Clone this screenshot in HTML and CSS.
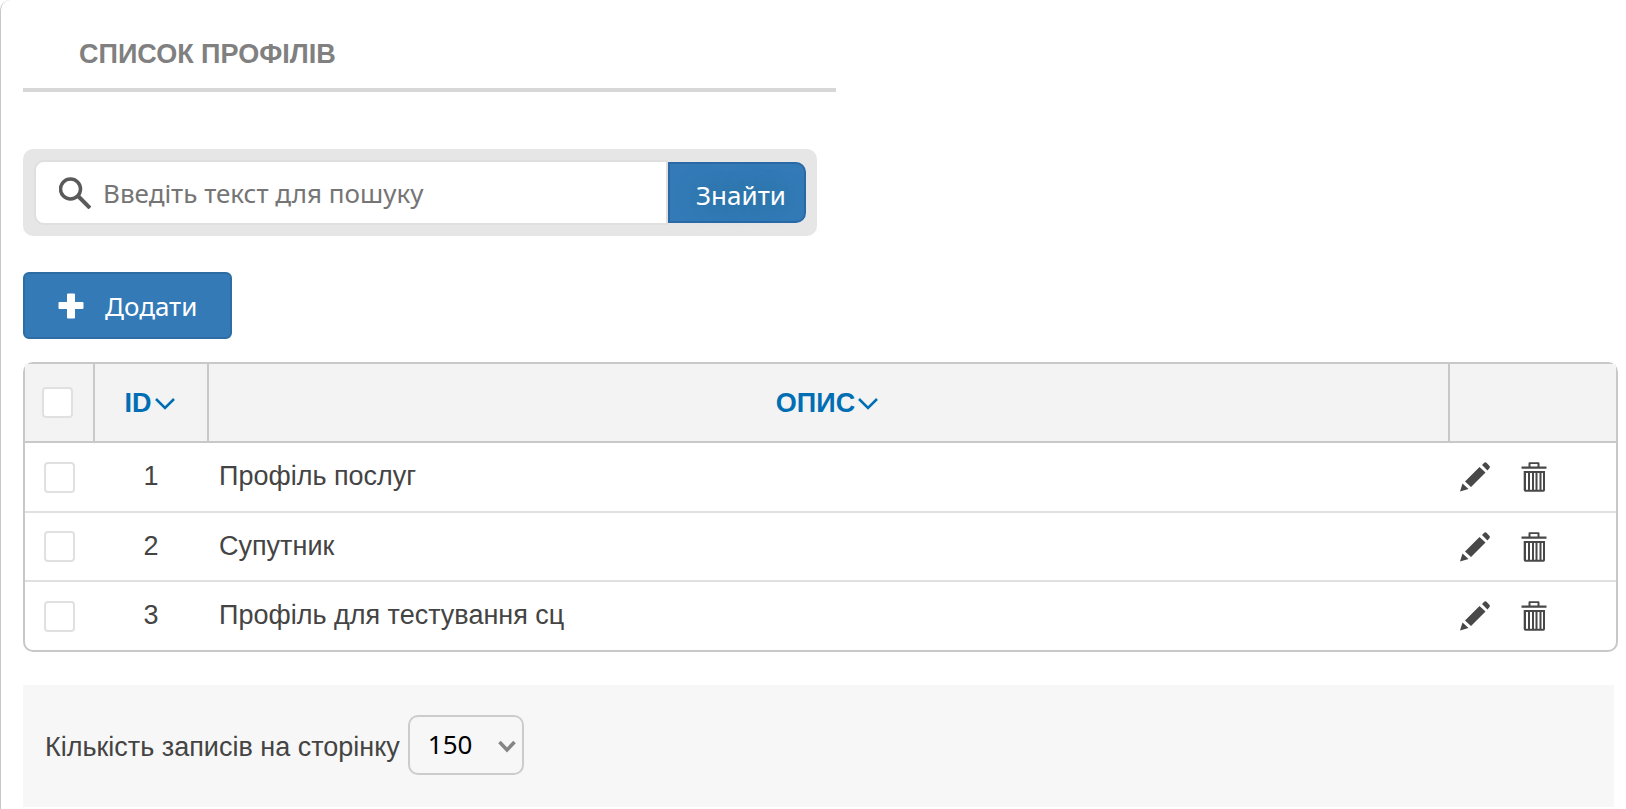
FILE: index.html
```html
<!DOCTYPE html>
<html lang="uk">
<head>
<meta charset="utf-8">
<title>Список профілів</title>
<link rel="stylesheet" href="styles.css">
</head>
<body>
<svg class="sprite" aria-hidden="true">
  <symbol id="pencil" viewBox="0 0 30 30">
    <path d="M0 29.500L2.500 21.500L8.500 27ZM5 19.500L19.500 5L25.500 10.500L11 25ZM22 3L24.500 .5Q25.500 -.3 26.500 .7L29.500 4Q30.300 5 29.500 6L27.500 8.500Z"/>
  </symbol>
  <symbol id="trash" viewBox="0 0 26 30">
    <path fill-rule="evenodd" d="M0.500 4.500H7.500V1.500Q7.500 .3 8.500 .3H17.500Q18.500 .3 18.500 1.500V4.500H25.500V6.700H0.500ZM9.500 2V4.500H16.500V2ZM2.700 9H24V28Q24 29.700 22.500 29.700H4.500Q2.700 29.700 2.700 28ZM5 11V27.700H7V11ZM9 11V27.700H11V11ZM13 11V27.700H14.500V11ZM16.500 11V27.700H18.500V11ZM20.500 11V27.700H22V11Z"/>
  </symbol>
  <symbol id="chevron" viewBox="0 0 20 12">
    <path d="M1 1L10 10L19 1" fill="none" stroke="currentColor" stroke-width="2.500"/>
  </symbol>
</svg>
<main class="panel">
  <h1 class="title">СПИСОК ПРОФІЛІВ</h1>

  <form class="search" role="search">
    <label class="search-field">
      <svg class="search-icon" viewBox="0 0 32 32" aria-hidden="true"><circle cx="11.500" cy="12" r="10" fill="none" stroke="#5a5a5a" stroke-width="3.500"/><path d="M19 19L31 31" stroke="#5a5a5a" stroke-width="4"/></svg>
      <input class="search-input" type="text" placeholder="Введіть текст для пошуку" aria-label="Пошук">
    </label>
    <button class="search-button" type="button">Знайти</button>
  </form>

  <button class="add-button" type="button">
    <svg class="plus-icon" viewBox="0 0 26 26" aria-hidden="true"><path d="M10 .5H16Q17 .5 17 1.500V9H24.500Q25.500 9 25.500 10V15Q25.500 16 24.500 16H17V24.500Q17 25.500 16 25.500H10Q9 25.500 9 24.500V16H1.500Q.5 16 .5 15V10Q.5 9 1.500 9H9V1.500Q9 .5 10 .5Z"/></svg>
    <span>Додати</span>
  </button>

  <table class="grid">
    <colgroup><col class="col-check"><col class="col-id"><col><col class="col-actions"></colgroup>
    <thead>
      <tr>
        <th><input class="check" type="checkbox" aria-label="Вибрати всі"></th>
        <th><a class="sort" href="#">ID<svg class="chevron" aria-hidden="true"><use href="#chevron"/></svg></a></th>
        <th><a class="sort" href="#">ОПИС<svg class="chevron" aria-hidden="true"><use href="#chevron"/></svg></a></th>
        <th></th>
      </tr>
    </thead>
    <tbody>
      <tr>
        <td class="cell-check"><input class="check" type="checkbox" aria-label="Вибрати 1"></td>
        <td class="cell-id">1</td>
        <td class="cell-name">Профіль послуг</td>
        <td><div class="actions"><button class="icon-button" type="button" aria-label="Редагувати"><svg class="pencil"><use href="#pencil"/></svg></button><button class="icon-button" type="button" aria-label="Видалити"><svg class="trash"><use href="#trash"/></svg></button></div></td>
      </tr>
      <tr>
        <td class="cell-check"><input class="check" type="checkbox" aria-label="Вибрати 2"></td>
        <td class="cell-id">2</td>
        <td class="cell-name">Супутник</td>
        <td><div class="actions"><button class="icon-button" type="button" aria-label="Редагувати"><svg class="pencil"><use href="#pencil"/></svg></button><button class="icon-button" type="button" aria-label="Видалити"><svg class="trash"><use href="#trash"/></svg></button></div></td>
      </tr>
      <tr>
        <td class="cell-check"><input class="check" type="checkbox" aria-label="Вибрати 3"></td>
        <td class="cell-id">3</td>
        <td class="cell-name">Профіль для тестування сц</td>
        <td><div class="actions"><button class="icon-button" type="button" aria-label="Редагувати"><svg class="pencil"><use href="#pencil"/></svg></button><button class="icon-button" type="button" aria-label="Видалити"><svg class="trash"><use href="#trash"/></svg></button></div></td>
      </tr>
    </tbody>
  </table>

  <footer class="pager">
    <label class="pager-label" for="page-size">Кількість записів на сторінку</label>
    <span class="select-wrap">
      <select class="page-size" id="page-size"><option>150</option></select>
      <svg class="select-arrow" viewBox="0 0 18 14" aria-hidden="true"><path d="M1.500 2L9 10L16.500 2" fill="none" stroke="#858585" stroke-width="3.500"/></svg>
    </span>
  </footer>
</main>
</body>
</html>
```

FILE: styles.css
```css
* { box-sizing: border-box; }

body {
  margin: 0;
  background: #fff;
  color: #444;
  font-family: "Liberation Sans", Arial, sans-serif;
  font-size: 27px;
  line-height: 32px;
}

button, input, select {
  margin: 0;
  font-family: "Noto Sans", sans-serif;
  font-size: 26px;
}

.sprite { position: absolute; width: 0; height: 0; }

.panel {
  min-height: 100vh;
  padding: 36px 8px 2px 22px;
  border-left: 1px solid #c8c8c8;
  border-top-left-radius: 10px;
}

.title {
  width: 51%;
  margin: 0 0 57px;
  padding: 2px 56px 18px;
  border-bottom: 4px solid #d7d7d7;
  color: #808080;
  font-size: 27px;
  font-weight: bold;
  line-height: 32px;
}

.search {
  display: flex;
  align-items: center;
  width: 794px;
  max-width: 100%;
  padding: 11px;
  border-radius: 10px;
  background: #e6e6e6;
}

.search-field {
  display: flex;
  flex: 1;
  align-items: center;
  gap: 12px;
  height: 65px;
  padding-left: 23px;
  border: 2px solid #dfdfdf;
  border-radius: 10px 0 0 10px;
  background: #fff;
}

.search-icon { width: 32px; height: 32px; }

.search-input {
  flex: 1;
  min-width: 0;
  height: 60px;
  padding: 0;
  border: 0;
  outline: 0;
  background: transparent;
}

.search-input::placeholder { color: #757575; opacity: 1; }

.search-button {
  width: 138px;
  height: 61px;
  padding: 4px 0 0 8px;
  border: 2px solid #2a69a6;
  border-radius: 0 10px 10px 0;
  background: #337ab7;
  color: #fff;
  text-shadow: 0 0 20px #1f6f80;
}

.add-button {
  display: flex;
  align-items: center;
  gap: 21px;
  height: 67px;
  margin: 36px 0 23px;
  padding: 0 33px;
  border: 2px solid #2e6da4;
  border-radius: 6px;
  background: #337ab7;
  color: #fff;
}

.plus-icon { width: 26px; height: 26px; fill: #fff; }

.grid {
  width: 100%;
  table-layout: fixed;
  border: 2px solid #c8c8c8;
  border-radius: 10px;
  border-spacing: 0;
}

.col-check { width: 70px; }
.col-id { width: 114px; }
.col-actions { width: 168px; }

.grid th {
  height: 79px;
  padding: 0 3px 0 0;
  border-right: 2px solid #c8c8c8;
  border-bottom: 2px solid #c8c8c8;
  background: #f3f3f3;
  vertical-align: middle;
}

.grid th:last-child { border-right: 0; }

.col-actions { width: 166px; }

.grid td {
  height: 70px;
  padding: 0;
  border-bottom: 2px solid #e0e0e0;
}

.grid tr + tr td { height: 69px; }
.grid tr:last-child td { height: 68px; border-bottom: 0; }

.grid .cell-check { padding-right: 2px; }
.grid .cell-id { padding: 0 2px 2px 0; text-align: center; }
.grid .cell-name { padding: 0 0 2px 10px; }

.sort {
  display: inline-flex;
  align-items: center;
  gap: 3px;
  color: #006eb3;
  text-decoration: none;
}

.chevron { width: 20px; height: 12px; margin-top: 3px; }

.check {
  display: block;
  width: 31px;
  height: 31px;
  margin: 0 auto;
  appearance: none;
  border: 2px solid #e0e0e0;
  border-radius: 4px;
  background: #fff;
}

.actions {
  display: flex;
  align-items: center;
  gap: 31px;
  padding-left: 10px;
}

.icon-button {
  display: flex;
  padding: 0;
  border: 0;
  background: none;
  fill: #484848;
}

.pencil { width: 30px; height: 30px; }
.trash { width: 26px; height: 30px; }

.pager {
  display: flex;
  align-items: center;
  gap: 8px;
  margin: 33px 4px 0 0;
  padding: 30px 22px 32px;
  background: #f7f7f7;
}

.pager-label { padding-top: 4px; }

.select-wrap { position: relative; display: flex; }

.page-size {
  width: 116px;
  height: 60px;
  padding: 0 18px 2px;
  appearance: none;
  border: 2px solid #ccc;
  border-radius: 10px;
  background: transparent;
  color: #000;
}

.select-arrow {
  position: absolute;
  top: 25px;
  right: 8px;
  width: 18px;
  height: 14px;
  pointer-events: none;
}
```
